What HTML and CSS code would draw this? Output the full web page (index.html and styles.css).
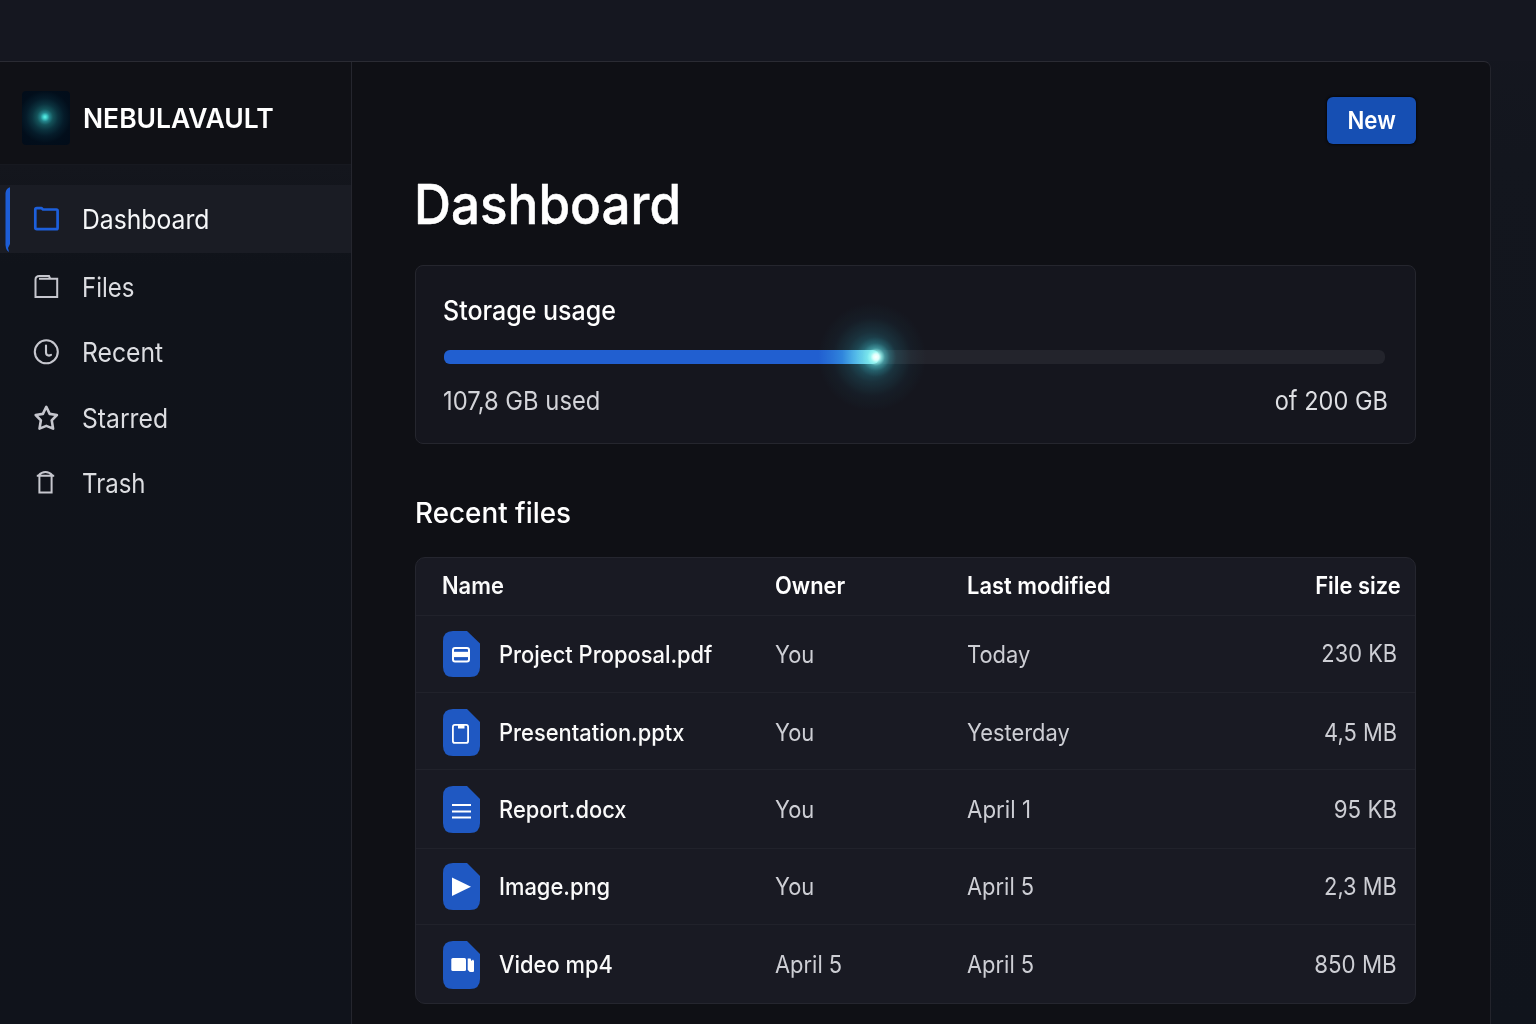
FILE: index.html
```html
<!DOCTYPE html>
<html lang="en">
<head>
<meta charset="utf-8">
<title>NebulaVault</title>
<link rel="stylesheet" href="styles.css">
</head>
<body>
<div class="topbar"></div>
<div class="app">
  <div class="window">
    <aside class="sidebar">
      <div class="brand">
        <span class="brand-mark"></span>
        <span class="brand-name">NEBULAVAULT</span>
      </div>
      <nav class="nav">
        <a class="nav-item active">
          <svg class="mark" width="6" height="66" viewBox="0 0 6 66"><path d="M5 0.3V57L3 61L4 65Q1 63.500 0.500 58V6Q1 1.500 5 0.300Z" fill="#1d5dd6"/></svg>
          <svg class="icon" width="28" height="28" viewBox="0 0 28 28" fill="none" stroke="#1d5fdb" stroke-width="2.700" stroke-linejoin="round"><path d="M3.300 4.500Q3.300 3.100 4.800 3.100H9.400L11 4.500H24.400Q25.600 4.500 25.600 5.700V23Q25.600 24.200 24.400 24.200H4.800Q3.300 24.200 3.300 22.700Z"/></svg>
          <span class="label">Dashboard</span>
        </a>
        <a class="nav-item files">
          <svg class="icon" width="28" height="28" viewBox="0 0 28 28" fill="none" stroke="#c6c7ce" stroke-width="2"><path d="M3.500 24V6.500Q3.500 3 7.500 3H17L18.300 5.800H25.200V24ZM7 5.800H18.300"/></svg>
          <span class="label narrow">Files</span>
        </a>
        <a class="nav-item recent">
          <svg class="icon" width="28" height="28" viewBox="0 0 28 28" fill="none" stroke="#c6c7ce" stroke-width="2.100" stroke-linecap="round"><circle cx="14.300" cy="13.800" r="11.500"/><path d="M14 7.500V14.600Q14 17.600 17 17.600L19 16.900"/></svg>
          <span class="label">Recent</span>
        </a>
        <a class="nav-item starred">
          <svg class="icon" width="28" height="28" viewBox="0 0 28 28" fill="none" stroke="#c6c7ce" stroke-width="2.600" stroke-linejoin="round"><path d="M14.300 2.800L17.700 9.900L24.900 11L19.700 16.300L21.100 24.600L14.300 21.900L7.500 24.600L8.900 16.300L3.700 11L10.900 9.900Z"/></svg>
          <span class="label">Starred</span>
        </a>
        <a class="nav-item trash">
          <svg class="icon" width="28" height="28" viewBox="0 0 28 28" fill="none" stroke="#c6c7ce" stroke-width="2"><path d="M7.400 7V23.400H19.600V7M4.800 6.700H22.200M6.600 6.300Q9.500 3 13.500 3Q17.500 3 20.400 6.300"/></svg>
          <span class="label narrow">Trash</span>
        </a>
      </nav>
    </aside>

    <main class="main">
      <div class="actions"><button class="new-btn"><span>New</span></button></div>
      <h1 class="title"><span>Dashboard</span></h1>

      <section class="storage">
        <h2 class="storage-title"><span>Storage usage</span></h2>
        <div class="track"><div class="fill"></div><i class="glow"></i></div>
        <div class="storage-meta"><span class="used">107,8 GB used</span><span class="total">of 200 GB</span></div>
      </section>

      <h2 class="section-title"><span>Recent files</span></h2>

      <section class="table">
        <div class="row head">
          <div class="name"><span class="t medium">Name</span></div>
          <div><span class="t">Owner</span></div>
          <div><span class="t">Last modified</span></div>
          <div class="size"><span class="t">File size</span></div>
        </div>
        <div class="row r1">
          <div class="name">
            <svg class="file" width="37" height="46" viewBox="0 0 37 46"><path class="sheet" d="M10 0H24L37 12.500V36Q37 46 27 46H10Q0 46 0 36V10Q0 0 10 0Z"/><rect x="10" y="17" width="16" height="13.600" rx="2" fill="none" stroke="#fff" stroke-width="2"/><path d="M10 20.800H26V26.100H10Z" fill="#fff"/></svg>
            <span class="t">Project Proposal.pdf</span></div>
          <div><span class="t">You</span></div>
          <div><span class="t">Today</span></div>
          <div class="size"><span class="t">230 KB</span></div>
        </div>
        <div class="row r2">
          <div class="name">
            <svg class="file" width="37" height="47" viewBox="0 0 37 47"><path class="sheet" d="M10 0H24L37 13V37Q37 47 27 47H10Q0 47 0 37V10Q0 0 10 0Z"/><rect x="9.900" y="15.900" width="15.200" height="18" rx="2" fill="none" stroke="#fff" stroke-width="1.800"/><path d="M15 15H21.500V19.500H15Z" fill="#fff"/></svg>
            <span class="t">Presentation.pptx</span></div>
          <div><span class="t">You</span></div>
          <div><span class="t">Yesterday</span></div>
          <div class="size"><span class="t">4,5 MB</span></div>
        </div>
        <div class="row r3">
          <div class="name">
            <svg class="file" width="37" height="47" viewBox="0 0 37 47"><path class="sheet" d="M10 0H24L37 13V37Q37 47 27 47H10Q0 47 0 37V10Q0 0 10 0Z"/><path d="M9 19H28M9 25.500H28M9 31.500H28" stroke="#fff" stroke-width="2"/></svg>
            <span class="t">Report.docx</span></div>
          <div><span class="t">You</span></div>
          <div><span class="t wide">April 1</span></div>
          <div class="size"><span class="t wide">95 KB</span></div>
        </div>
        <div class="row r4">
          <div class="name">
            <svg class="file" width="37" height="47" viewBox="0 0 37 47"><path class="sheet" d="M10 0H24L37 13V37Q37 47 27 47H10Q0 47 0 37V10Q0 0 10 0Z"/><path d="M9 14.500L28 23.800L9 33Z" fill="#fff"/></svg>
            <span class="t">Image.png</span></div>
          <div><span class="t">You</span></div>
          <div><span class="t">April 5</span></div>
          <div class="size"><span class="t">2,3 MB</span></div>
        </div>
        <div class="row r5">
          <div class="name">
            <svg class="file" width="37" height="48" viewBox="0 0 37 48"><path class="sheet" d="M10 0H24L37 13V38Q37 48 27 48H10Q0 48 0 38V10Q0 0 10 0Z"/><rect x="8.300" y="17" width="14.700" height="13" rx="1.500" fill="#fff"/><path d="M24.700 17.500H27.500L28.500 20L30 18.500L31 20V30.500Q29 31.500 26.500 30.700L24.700 28.700Z" fill="#fff"/></svg>
            <span class="t">Video mp4</span></div>
          <div><span class="t">April 5</span></div>
          <div><span class="t">April 5</span></div>
          <div class="size"><span class="t wide">850 MB</span></div>
        </div>
      </section>
    </main>
  </div>
</div>
</body>
</html>
```
FILE: styles.css
```css
* { box-sizing: border-box; }
body {
  margin: 0;
  width: 1536px;
  height: 1024px;
  overflow: hidden;
  display: flex;
  flex-direction: column;
  background: linear-gradient(180deg, #151720 0, #13161e 160px, #10141c 100%);
  font-family: Inter, "Liberation Sans", sans-serif;
  color: #fff;
}
h1, h2 { margin: 0; }

.topbar { height: 61px; background: #151720; flex: none; }
.app { flex: 1; min-height: 0; display: flex; }
.window {
  width: 1491px;
  display: flex;
  background: #0f1015;
  border-top: 1px solid #2a2b33;
  border-right: 1px solid #23242c;
  border-top-right-radius: 7px;
}

/* sidebar */
.sidebar { width: 352px; border-right: 1px solid #25262e; display: flex; flex-direction: column; }
.brand {
  height: 103px;
  padding: 9px 0 0 22px;
  display: flex;
  align-items: center;
  background: #101116;
  border-bottom: 1px solid #171920;
}
.brand-mark {
  width: 48px;
  height: 54px;
  border-radius: 4px;
  background: radial-gradient(circle at 23px 26px, #5ff5ea 0, #40cdc9 2px, #24838a 4.5px, #145259 8px, #0b323e 13px, #051b29 19px, #020e1b 26px, #020c19 100%);
}
.brand-name {
  margin-left: 12.500px;
  font-size: 27.500px;
  font-weight: 600;
  line-height: 34px;
  transform: scaleX(.963);
  transform-origin: left;
}
.nav {
  flex: 1;
  padding-top: 20px;
  background: linear-gradient(180deg, #14161d 0, #10131a 100px, #10131b 100%);
}
.nav-item {
  position: relative;
  display: flex;
  align-items: center;
  padding-left: 32px;
  color: #dcdde1;
}
.nav-item.active { height: 68px; background: #1a1c24; color: #f6f7f9; }
.nav-item.files { height: 68px; }
.nav-item.recent { height: 62px; }
.nav-item.starred { height: 70px; }
.nav-item.trash { height: 60px; }
.mark { position: absolute; left: 5px; top: 2px; }
.icon { flex: none; }
.files .icon, .trash .icon { margin-top: -1px; }
.label {
  margin: 2px 0 0 21.500px;
  font-size: 27px;
  line-height: 34px;
  transform: scaleX(.915);
  transform-origin: left;
}
.label.narrow { transform: scaleX(.89); }

/* main column */
.main { width: 1064px; padding: 35px 0 0 63px; display: flex; flex-direction: column; }
.actions { display: flex; justify-content: flex-end; height: 48px; }
.new-btn {
  width: 89px;
  height: 47px;
  padding: 0 0 2px;
  border: 0;
  border-radius: 6px;
  background: #164fb3;
  box-shadow: 0 0 2px 1px #07080d;
  color: #fff;
  font: 600 24.500px/30px Inter, "Liberation Sans", sans-serif;
}
.new-btn span { display: inline-block; transform: scaleX(.905); }
.title {
  margin: 25px 0 0 -1.500px;
  height: 68px;
  font-size: 55px;
  line-height: 68px;
  font-weight: 500;
  -webkit-text-stroke: .5px #fff;
}
.title span { display: inline-block; transform: scaleX(.931); transform-origin: left; }

.storage {
  margin-top: 27px;
  height: 179px;
  padding: 26px 27px 0 28px;
  border: 1px solid #25262e;
  border-radius: 8px;
  background: #15161e;
}
.storage-title { font-size: 26.500px; line-height: 36px; font-weight: 500; height: 36px; }
.storage-title span { display: inline-block; transform: scaleX(.943); transform-origin: left; margin-left: -1px; }
.track { position: relative; height: 14px; width: 941px; margin-top: 22px; border-radius: 6px; background: #23242c; }
.fill {
  width: 435px;
  height: 14px;
  border-radius: 6px;
  background: linear-gradient(90deg, #215fd0 0, #215fd0 375px, #2d79d8 398px, #4fabe2 413px, #7fdcea 426px, #8ce8e8 100%);
}
.glow {
  position: absolute;
  left: 372px;
  top: -53px;
  width: 120px;
  height: 120px;
  background: radial-gradient(circle, #fff 0, #dcfffa 3px, rgba(150, 245, 236, .8) 5.5px, rgba(95, 215, 215, .4) 9px, rgba(60, 175, 182, .15) 14px, rgba(40, 150, 160, 0) 20px);
}
/* wide halo, screened so the bar keeps its own colour */
.glow::before {
  content: "";
  position: absolute;
  inset: 0;
  background: radial-gradient(circle at 56px 60px, rgba(26, 138, 150, .7) 0, rgba(22, 120, 134, .52) 13px, rgba(16, 98, 112, .3) 25px, rgba(10, 75, 90, .11) 39px, rgba(10, 65, 78, 0) 54px);
  mix-blend-mode: screen;
}
.storage-meta { display: flex; justify-content: space-between; margin-top: 19px; font-size: 26px; line-height: 36px; color: #d3d4d9; }
.used { transform: scaleX(.914); transform-origin: left; margin-left: -1px; }
.total { transform: scaleX(.906); transform-origin: right; color: #dedfe3; }

.section-title { margin-top: 49px; height: 40px; font-size: 29px; line-height: 40px; font-weight: 500; }
.section-title span { display: inline-block; transform: scaleX(.96); transform-origin: left; margin-left: -.5px; }

/* file table */
.table {
  margin-top: 24px;
  height: 447px;
  border: 1px solid #25262f;
  border-radius: 10px;
  background: #191a23;
}
.row {
  display: grid;
  grid-template-columns: 332px 192px 1fr 170px;
  align-items: center;
  padding: 0 18px 0 27px;
  font-size: 24px;
  line-height: 30px;
  color: #cdced4;
  border-bottom: 1px solid #21222b;
}
.head { height: 58px; padding: 0 14px 2px 27px; font-weight: 600; color: #fff; }
.r1, .r2 { height: 77px; }
.r2, .r5 { padding-top: 2px; }
.r3 { height: 79px; }
.r4 { height: 76px; }
.r5 { height: 78px; border-bottom: 0; }
.name { display: flex; align-items: center; color: #fafafa; font-weight: 500; }
.head .name { margin-left: -1.500px; }
.size { text-align: right; }
.t { display: inline-block; transform: scaleX(.912); transform-origin: left; white-space: nowrap; }
.r1 > :not(.size) .t, .r2 .t, .r3 .t { padding-top: 2px; }
.t.wide { transform: scaleX(.93); }
.size .t { transform-origin: right; }
.t.medium { font-weight: 600; }
.file { flex: none; margin-right: 18.500px; }
.sheet { fill: #1f58c2; }
```
